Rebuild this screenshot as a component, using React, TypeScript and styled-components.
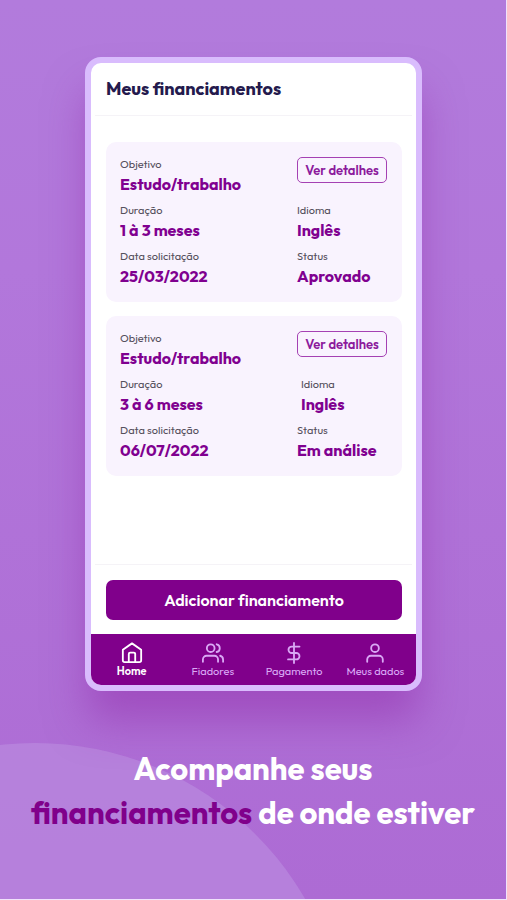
import React from "react";
import styled, { createGlobalStyle } from "styled-components";

const GlobalStyle = createGlobalStyle`
  * { box-sizing: border-box; }
  body { margin: 0; }
  body, button { font-family: Outfit, Lato, sans-serif; }
  h1, h2, p, dl, dt, dd, ul { margin: 0; padding: 0; }
`;

const Page = styled.div`
  position: relative;
  z-index: 0;
  overflow: hidden;
  min-height: 100vh;
  display: flex;
  flex-direction: column;
  padding: 57px 0 64px;
  border-right: 1px solid #f0e2fb;
  border-bottom: 1px solid #f0e2fb;
  background: linear-gradient(180deg, #b27bdc 0%, #b277db 30%, #ad6bd4 100%);
`;

const Disc = styled.div`
  position: absolute;
  z-index: -1;
  left: -277px;
  bottom: -468px;
  width: 624px;
  height: 624px;
  border-radius: 50%;
  background: rgba(190, 145, 226, 0.55);
`;

const Phone = styled.main`
  flex: 1;
  display: flex;
  flex-direction: column;
  margin: 0 84px 0 85px;
  overflow: hidden;
  border: 6px solid #d9bcfd;
  border-radius: 16px;
  background: #fff;
  box-shadow: 0 32px 40px -2px rgba(145, 45, 170, 0.5);
`;

const Header = styled.header`
  margin: 0 4px;
  padding: 12px 11px 13px;
  border-bottom: 1px solid #f5f3f7;
`;

const Title = styled.h1`
  font-size: 18px;
  line-height: 27px;
  font-weight: 700;
  color: #241a4d;
`;

const List = styled.section`
  flex: 1;
  display: flex;
  flex-direction: column;
  gap: 14px;
  padding: 26px 14px 26px 15px;
`;

const Card = styled.article`
  display: flex;
  flex-direction: column;
  gap: 6px;
  padding: 14px 15px 14px 14px;
  border-radius: 10px;
  background: #f9f3fe;
`;

const Row = styled.dl<{ $aside: number }>`
  display: grid;
  grid-template-columns: 1fr ${(p) => p.$aside}px;
  align-items: start;
`;

const Label = styled.dt`
  font-size: 11px;
  line-height: 16px;
  color: #55505c;
`;

const Value = styled.dd`
  font-size: 16px;
  line-height: 24px;
  font-weight: 700;
  white-space: nowrap;
  color: #800090;
`;

const DetailsButton = styled.button`
  height: 26px;
  margin-top: 1px;
  padding: 0;
  border: 1px solid #a541b3;
  border-radius: 5px;
  background: transparent;
  font-size: 13px;
  font-weight: 600;
  color: #8c1a9c;
  white-space: nowrap;
`;

const Actions = styled.div`
  margin: 0 4px;
  padding: 15px 10px 14px 11px;
  border-top: 1px solid #f5f3f7;
`;

const AddButton = styled.button`
  display: block;
  width: 100%;
  height: 40px;
  padding: 0;
  border: 0;
  border-radius: 7px;
  background: #80008b;
  font-size: 16px;
  font-weight: 600;
  font-variant-ligatures: none;
  color: #fff;
`;

const Nav = styled.nav`
  display: grid;
  grid-template-columns: repeat(4, 1fr);
  height: 51px;
  background: #80008b;
`;

const NavLink = styled.a<{ $active?: boolean }>`
  display: flex;
  flex-direction: column;
  align-items: center;
  padding-top: 8px;
  font-size: 11px;
  line-height: 14px;
  font-weight: ${(p) => (p.$active ? 600 : 400)};
  color: ${(p) => (p.$active ? "#fff" : "#d9a8f5")};
  text-decoration: none;
  white-space: nowrap;
`;

const Icon = styled.svg`
  width: 22px;
  height: 22px;
  fill: none;
  stroke: currentColor;
  stroke-width: 2;
  stroke-linecap: round;
  stroke-linejoin: round;
`;

const Caption = styled.h2`
  margin-top: 56px;
  font-size: 31px;
  line-height: 44px;
  font-weight: 700;
  text-align: center;
  color: #fff;
`;

const Highlight = styled.span`
  color: #80008b;
`;

const loans = [
  { goal: "Estudo/trabalho", length: "1 à 3 meses", language: "Inglês", date: "25/03/2022", status: "Aprovado", languageWidth: 90 },
  { goal: "Estudo/trabalho", length: "3 à 6 meses", language: "Inglês", date: "06/07/2022", status: "Em análise", languageWidth: 86 },
];

const tabs = [
  { name: "Home", shape: <path d="M2 8.500 12 1.500 22 8.500V20a2 2 0 0 1-2 2H4a2 2 0 0 1-2-2ZM8.500 22V13a1.500 1.500 0 0 1 1.500-1.500h4a1.500 1.500 0 0 1 1.500 1.500V22" /> },
  { name: "Fiadores", shape: <path d="M9.500 2.500a4.200 4.200 0 1 0 0 8.400 4.200 4.200 0 0 0 0-8.400ZM1 21.500v-2.500a4 4 0 0 1 4-4h8.500a4 4 0 0 1 4 4V21.500M16 2.500a4.300 4.300 0 0 1 0 8.400M19.800 15a4.500 4.500 0 0 1 3.200 4.300V21.500" /> },
  { name: "Pagamento", shape: <path d="M12 1v22M18 5H9.500a3.500 3.500 0 0 0 0 7h5a3.500 3.500 0 0 1 0 7H5.500" /> },
  { name: "Meus dados", shape: <path d="M12 2.500a4.200 4.200 0 1 0 0 8.400 4.200 4.200 0 0 0 0-8.400ZM3.500 21.500v-2.500a4 4 0 0 1 4-4h9a4 4 0 0 1 4 4V21.500" /> },
];

function Field({ label, value }: { label: string; value: string }) {
  return (
    <div>
      <Label>{label}</Label>
      <Value>{value}</Value>
    </div>
  );
}

export default function App() {
  return (
    <>
      <GlobalStyle />
      <Page>
        <Disc />
        <Phone>
          <Header>
            <Title>Meus financiamentos</Title>
          </Header>
          <List>
            {loans.map((loan) => (
              <Card key={loan.date}>
                <Row $aside={90}>
                  <Field label="Objetivo" value={loan.goal} />
                  <DetailsButton type="button">Ver detalhes</DetailsButton>
                </Row>
                <Row $aside={loan.languageWidth}>
                  <Field label="Duração" value={loan.length} />
                  <Field label="Idioma" value={loan.language} />
                </Row>
                <Row $aside={90}>
                  <Field label="Data solicitação" value={loan.date} />
                  <Field label="Status" value={loan.status} />
                </Row>
              </Card>
            ))}
          </List>
          <Actions>
            <AddButton type="button">Adicionar financiamento</AddButton>
          </Actions>
          <Nav>
            {tabs.map((tab, i) => (
              <NavLink key={tab.name} href="#" $active={i === 0}>
                <Icon viewBox="0 0 24 24" aria-hidden="true">{tab.shape}</Icon>
                {tab.name}
              </NavLink>
            ))}
          </Nav>
        </Phone>
        <Caption>
          Acompanhe seus
          <br />
          <Highlight>financiamentos</Highlight> de onde estiver
        </Caption>
      </Page>
    </>
  );
}
